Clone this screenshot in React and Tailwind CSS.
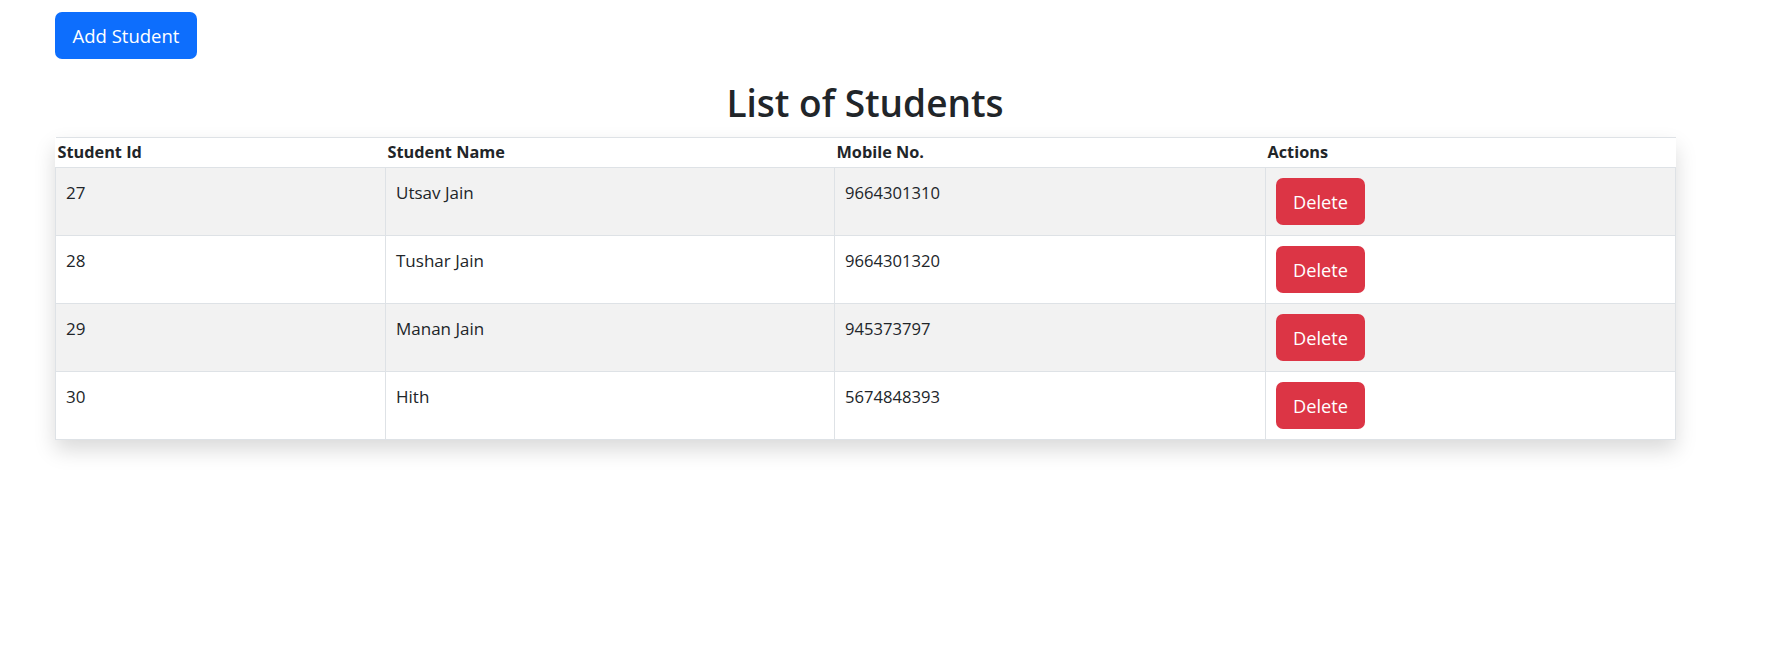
import React from "react";

const rows = [
  { id: 27, name: "Utsav Jain", mobile: "9664301310", striped: true },
  { id: 28, name: "Tushar Jain", mobile: "9664301320", striped: false },
  { id: 29, name: "Manan Jain", mobile: "945373797", striped: true },
  { id: 30, name: "Hith", mobile: "5674848393", striped: false },
];

export default function App() {
  return (
    <div className="min-h-screen bg-white text-[#212529] font-['Open_Sans',sans-serif]">
      <div className="w-[1675px] pl-[55px] pt-[12px]">
        <button className="h-[47px] w-[142px] rounded-[7px] bg-[#0d6efd] text-[18.5px] leading-[30px] text-white">
          Add Student
        </button>
        <h2 className="mt-[20px] mb-[10px] text-center text-[37px] font-semibold leading-[48px]">
          List of Students
        </h2>
        <table className="w-[1620px] table-fixed border-collapse shadow-[0_10px_20px_rgba(0,0,0,0.15)]">
          <thead>
            <tr className="bg-white">
              <th className="w-[330px] border-y border-[#dee2e6] px-[2px] py-0 text-left text-[16.3px] font-bold leading-[29px]">Student Id</th>
              <th className="w-[449px] border-y border-[#dee2e6] px-[2px] py-0 text-left text-[16.3px] font-bold leading-[29px]">Student Name</th>
              <th className="w-[431px] border-y border-[#dee2e6] px-[2px] py-0 text-left text-[16.3px] font-bold leading-[29px]">Mobile No.</th>
              <th className="w-[410px] border-y border-[#dee2e6] px-[2px] py-0 text-left text-[16.3px] font-bold leading-[29px]">Actions</th>
            </tr>
          </thead>
          <tbody>
            {rows.map((r) => (
              <tr key={r.id} className={r.striped ? "bg-[#f2f2f2]" : "bg-white"}>
                <td className="border border-[#dee2e6] px-[10px] py-[10px] align-top text-[17px] leading-[30px]">{r.id}</td>
                <td className="border border-[#dee2e6] px-[10px] py-[10px] align-top text-[17px] leading-[30px]">{r.name}</td>
                <td className="border border-[#dee2e6] px-[10px] py-[10px] align-top text-[16.6px] leading-[30px]">{r.mobile}</td>
                <td className="border border-[#dee2e6] px-[10px] py-[10px] align-top">
                  <button className="block h-[47px] w-[89px] rounded-[7px] bg-[#dc3545] text-[18.2px] leading-[30px] text-white">
                    Delete
                  </button>
                </td>
              </tr>
            ))}
          </tbody>
        </table>
      </div>
    </div>
  );
}
